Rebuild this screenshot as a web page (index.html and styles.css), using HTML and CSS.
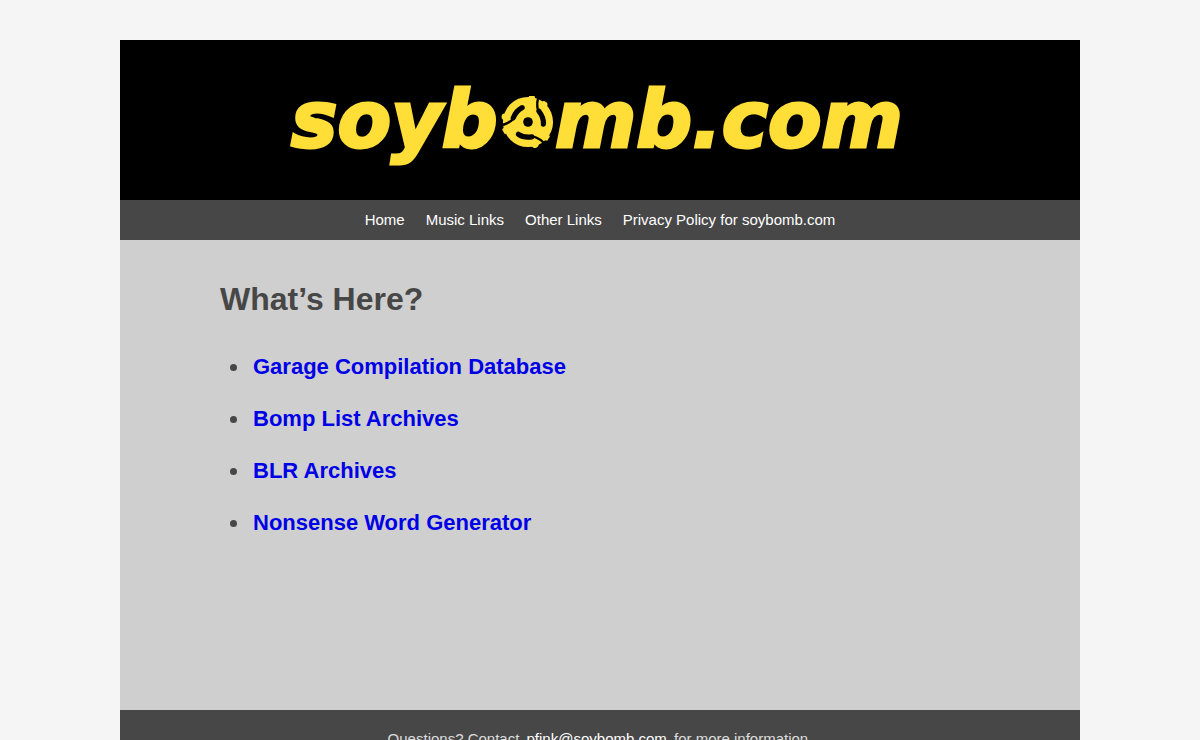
FILE: index.html
```html
<!DOCTYPE html>
<html lang="en">
<head>
  <meta charset="UTF-8">
  <meta name="viewport" content="width=device-width, initial-scale=1.0">
  <title>soybomb.com</title>
  <link rel="stylesheet" href="styles.css">
</head>
<body>

<div class="wrapper">
  <header class="banner">
    <svg class="logo" viewBox="120 40 960 160" role="img" aria-label="soybomb.com">
      <defs>
        <g id="arm">
          <path class="disc" d="M2 -60 L3 -76 L19 -76 L24 -60 Z"/>
          <circle class="disc" cx="-67" cy="-15" r="10"/>
        </g>
        <g id="slot">
          <path class="neck" d="M-86 10 Q-62 10 -42 -10"/>
          <path class="bulb" d="M-43 -12 Q-34 -34 -17 -42"/>
        </g>
      </defs>
      <text class="logo-text" x="291" y="147">soyb</text>
      <text class="logo-text" x="555" y="147">mb.com</text>
      <!-- 45 rpm adapter -->
      <g transform="translate(528 122) scale(.3433)">
        <circle class="disc" r="73"/>
        <use href="#arm"/>
        <use href="#arm" transform="rotate(120)"/>
        <use href="#arm" transform="rotate(240)"/>
        <use href="#slot"/>
        <use href="#slot" transform="rotate(120)"/>
        <use href="#slot" transform="rotate(240)"/>
        <circle class="hole" r="14"/>
      </g>
    </svg>
  </header>

  <nav class="menu">
    <a href="#">Home</a>
    <a href="#">Music Links</a>
    <a href="#">Other Links</a>
    <a href="#">Privacy Policy for soybomb.com</a>
  </nav>

  <main class="content">
    <h1>What’s Here?</h1>
    <ul>
      <li><a href="#">Garage Compilation Database</a></li>
      <li><a href="#">Bomp List Archives</a></li>
      <li><a href="#">BLR Archives</a></li>
      <li><a href="#">Nonsense Word Generator</a></li>
    </ul>
  </main>

  <footer class="footer">
    Questions? Contact <a href="mailto:pfink@soybomb.com">pfink@soybomb.com</a> for more information.
  </footer>
</div>

</body>
</html>
```
FILE: styles.css
```css
body {
  margin: 0;
  background: #f5f5f5;
  color: #474747;
  font-family: "Liberation Sans", Arial, sans-serif;
}

.wrapper {
  width: 80%;
  margin: 40px auto 0;
  background: #cfcfcf;
}

.banner { background: #000; }
.logo { display: block; width: 100%; }

.logo-text {
  font: italic bold 78px "DejaVu Sans", Verdana, sans-serif;
  fill: #ffde38;
  stroke: #ffde38;
  stroke-width: 3;
}

.disc { fill: #ffde38; }
.hole { fill: #000; }
.neck, .bulb { fill: none; stroke: #000; stroke-width: 7; stroke-linecap: round; }
.bulb { stroke-width: 15; }

.menu {
  display: flex;
  flex-wrap: wrap;
  justify-content: center;
  gap: 0 21px;
  background: #474747;
  font-size: 15px;
  line-height: 40px;
}

.menu a { color: #fff; text-decoration: none; }

.content {
  min-height: 430px;
  padding: 40px 100px 0;
}

h1 { margin: 0 0 36px; font-size: 32px; line-height: 38px; }

ul { margin: 0; padding-left: 30px; }

li {
  margin-bottom: 26px;
  padding-left: 3px;
  font-size: 22px;
  font-weight: bold;
  line-height: 26px;
}

li a { color: #0000e6; text-decoration: none; }

.footer {
  padding: 20px;
  background: #474747;
  color: #ddd;
  font-size: 15px;
  line-height: 18px;
  text-align: center;
}

.footer a { margin: 0 3px; color: #fff; text-decoration: none; }
```
